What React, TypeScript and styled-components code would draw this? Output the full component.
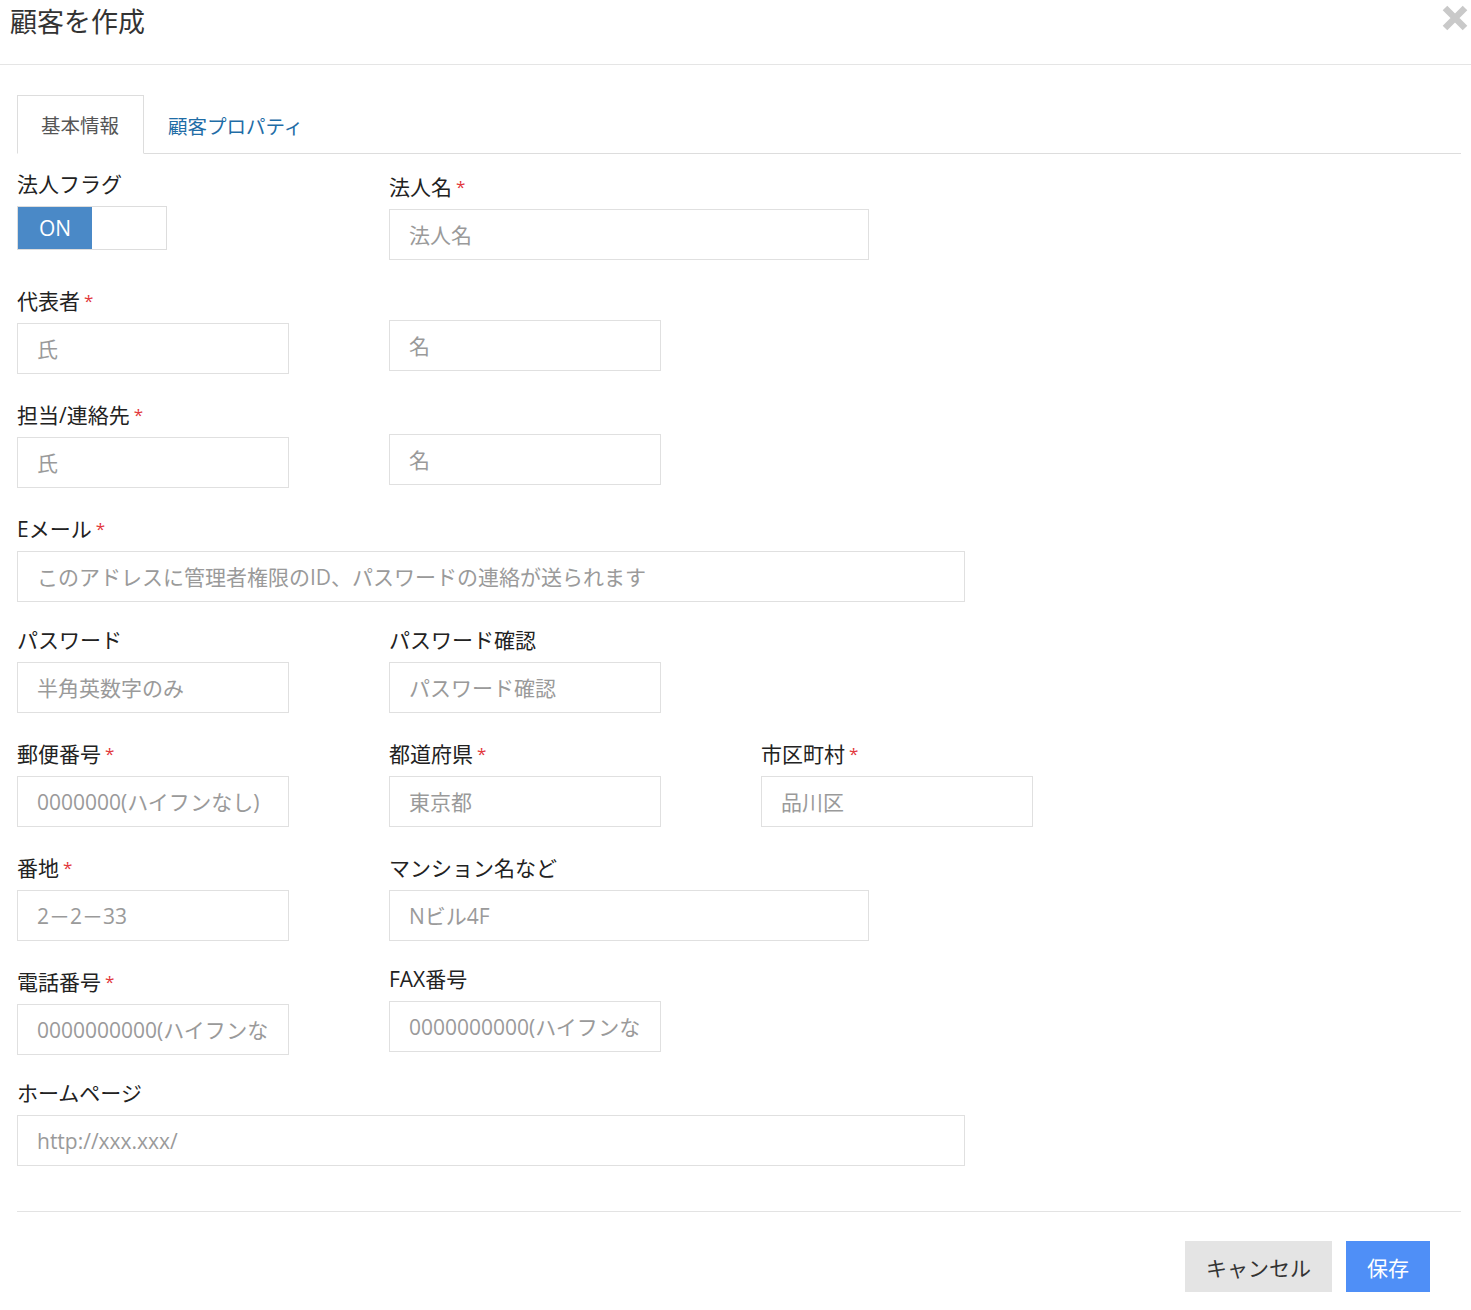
import React, {FunctionComponent, ReactElement} from "react";
import styled, {createGlobalStyle} from "styled-components";

const FONT = `"Open Sans", "Noto Sans CJK JP", sans-serif`;

const GlobalStyle = createGlobalStyle`
  html, body {
    margin: 0;
    padding: 0;
    background: #fff;
    font-family: ${FONT};
    color: #222;
  }
  * { box-sizing: border-box; }
`;

interface LabelProps {$lowered?: boolean}
interface InputProps {$width?: number}
interface ButtonProps {$primary?: boolean}
interface TabProps {$active?: boolean}

const Modal = styled.div`
  width: 1471px;
  min-height: 1310px;
  background: #fff;
`;

const Header = styled.header`
  display: flex;
  justify-content: space-between;
  align-items: flex-start;
  height: 65px;
  padding: 0 3px 0 10px;
  border-bottom: 1px solid #e5e5e5;
`;

const Title = styled.h1`
  margin: 0;
  font-size: 27px;
  font-weight: 400;
  line-height: 44px;
  color: #333;
`;

const CloseButton = styled.button`
  margin-top: 5px;
  padding: 0;
  width: 26px;
  height: 26px;
  border: none;
  background: transparent;
  cursor: pointer;
`;

const Body = styled.div`
  padding: 30px 10px 0 17px;
`;

const TabList = styled.div`
  display: flex;
  border-bottom: 1px solid #ddd;
  height: 59px;
`;

const Tab = styled.div<TabProps>`
  display: flex;
  align-items: center;
  height: 59px;
  padding: 0 24px 0 23px;
  margin-bottom: -1px;
  font-size: 19.5px;
  color: ${p => p.$active ? "#555" : "#1f6da6"};
  background: ${p => p.$active ? "#fff" : "transparent"};
  border: 1px solid ${p => p.$active ? "#ddd" : "transparent"};
  border-bottom: ${p => p.$active ? "1px solid #fff" : "none"};
  cursor: pointer;
`;

const Form = styled.form`
  padding-top: 18px;
`;

const Row = styled.div`
  display: flex;
  align-items: flex-start;
  margin-bottom: 26px;
`;

const Field = styled.div`
  min-width: 372px;
  display: flex;
  flex-direction: column;
`;

const Label = styled.label<LabelProps>`
  display: block;
  height: ${p => p.$lowered ? 27 : 24}px;
  padding-top: ${p => p.$lowered ? 3 : 0}px;
  margin-bottom: 10px;
  font-size: 21px;
  line-height: 24px;
  color: #222;
  white-space: nowrap;
`;

const Required = styled.span`
  margin-left: 4px;
  font-size: 17px;
  color: #e2383c;
  vertical-align: 2px;
`;

const Input = styled.input<InputProps>`
  width: ${p => p.$width ?? 272}px;
  height: 51px;
  padding: 0 19px;
  border: 1px solid #e0e0e0;
  border-radius: 0;
  font-family: ${FONT};
  font-size: 21px;
  color: #333;
  outline: none;

  &::placeholder {
    color: #9a9a9a;
  }
`;

const Toggle = styled.div`
  display: flex;
  width: 150px;
  height: 44px;
  border: 1px solid #ddd;
  background: #fff;
  cursor: pointer;
`;

const ToggleOn = styled.span`
  display: flex;
  align-items: center;
  justify-content: center;
  width: 74px;
  height: 100%;
  background: #4a89c7;
  color: #fff;
  font-size: 21px;
`;

const Divider = styled.hr`
  margin: 45px 0 0 0;
  border: none;
  border-top: 1px solid #e3e3e3;
`;

const Footer = styled.div`
  display: flex;
  justify-content: flex-end;
  gap: 14px;
  padding: 29px 31px 0 0;
`;

const Button = styled.button<ButtonProps>`
  height: 51px;
  padding: 0 21px;
  border: none;
  border-radius: 0;
  font-family: ${FONT};
  font-size: 21px;
  color: ${p => p.$primary ? "#fff" : "#333"};
  background: ${p => p.$primary ? "#4f8ff7" : "#e4e4e4"};
  cursor: pointer;
`;

interface FieldProps {
    label?: string,
    required?: boolean,
    lowered?: boolean,
    placeholder: string,
    width?: number
}

const FormField: FunctionComponent<FieldProps> = (props: FieldProps): ReactElement => {
    const {label, required, lowered, placeholder, width} = props;

    return (
        <Field>
            <Label $lowered={required || lowered}>
                {label}
                {required && <Required>*</Required>}
            </Label>
            <Input placeholder={placeholder} $width={width}/>
        </Field>
    );
};

const CloseIcon = () => (
    <svg width="26" height="26" viewBox="0 0 26 26">
        <path d="M3 3 L23 23 M23 3 L3 23" stroke="#c9c9c9" strokeWidth="6.5"/>
    </svg>
);

const App: FunctionComponent = (): ReactElement => {
    return (
        <Modal>
            <GlobalStyle/>
            <Header>
                <Title>顧客を作成</Title>
                <CloseButton aria-label="close">
                    <CloseIcon/>
                </CloseButton>
            </Header>

            <Body>
                <TabList>
                    <Tab $active>基本情報</Tab>
                    <Tab>顧客プロパティ</Tab>
                </TabList>

                <Form>
                    <Row>
                        <Field>
                            <Label>法人フラグ</Label>
                            <Toggle>
                                <ToggleOn>ON</ToggleOn>
                            </Toggle>
                        </Field>
                        <FormField label="法人名" required placeholder="法人名" width={480}/>
                    </Row>

                    <Row>
                        <FormField label="代表者" required placeholder="氏"/>
                        <FormField placeholder="名"/>
                    </Row>

                    <Row>
                        <FormField label="担当/連絡先" required placeholder="氏"/>
                        <FormField placeholder="名"/>
                    </Row>

                    <Row>
                        <FormField
                            label="Eメール"
                            required
                            placeholder="このアドレスに管理者権限のID、パスワードの連絡が送られます"
                            width={948}
                        />
                    </Row>

                    <Row>
                        <FormField label="パスワード" placeholder="半角英数字のみ"/>
                        <FormField label="パスワード確認" placeholder="パスワード確認"/>
                    </Row>

                    <Row>
                        <FormField label="郵便番号" required placeholder="0000000(ハイフンなし)"/>
                        <FormField label="都道府県" required placeholder="東京都"/>
                        <FormField label="市区町村" required placeholder="品川区"/>
                    </Row>

                    <Row>
                        <FormField label="番地" required placeholder="2－2－33"/>
                        <FormField label="マンション名など" lowered placeholder="Nビル4F" width={480}/>
                    </Row>

                    <Row>
                        <FormField label="電話番号" required placeholder="0000000000(ハイフンなし)"/>
                        <FormField label="FAX番号" placeholder="0000000000(ハイフンなし)"/>
                    </Row>

                    <Row>
                        <FormField label="ホームページ" placeholder="http://xxx.xxx/" width={948}/>
                    </Row>
                </Form>

                <Divider/>

                <Footer>
                    <Button type="button">キャンセル</Button>
                    <Button type="button" $primary>保存</Button>
                </Footer>
            </Body>
        </Modal>
    );
};

export default App;
